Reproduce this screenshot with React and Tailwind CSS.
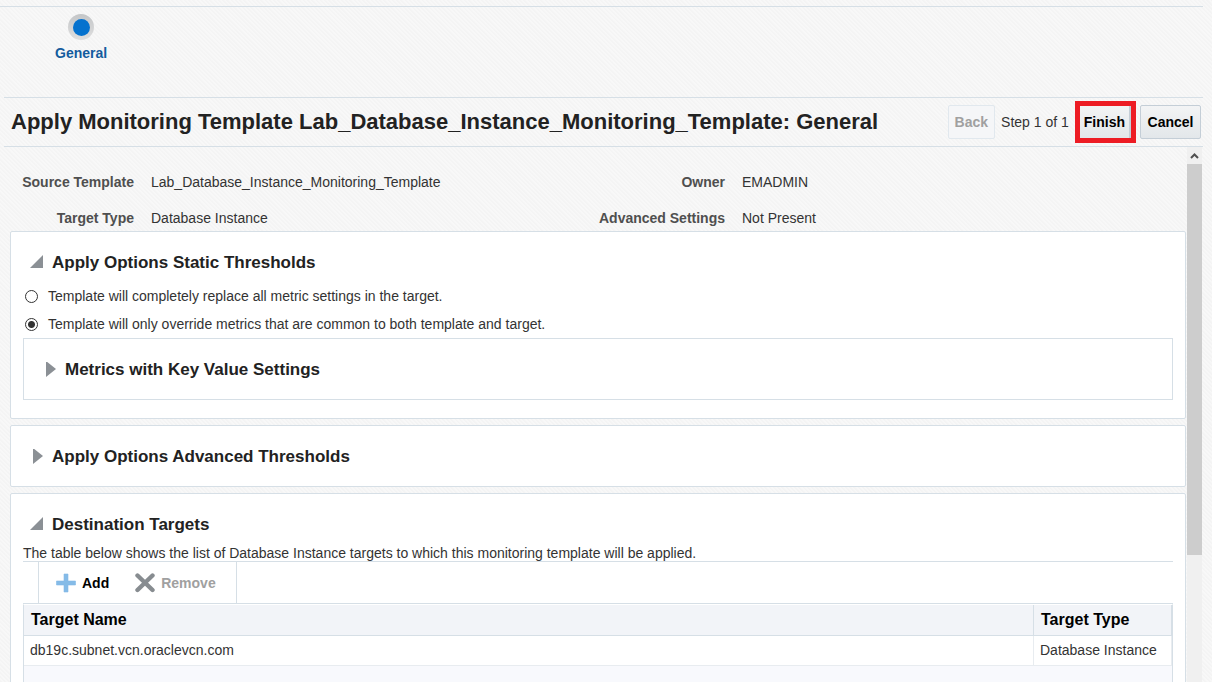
import { useState } from "react";

function Disclosure({ open, onToggle, children }) {
  return (
    <h2 className="text-[17px] leading-5 font-bold text-[#222222]">
      <button type="button" aria-expanded={open} onClick={onToggle} className="flex items-center gap-2">
        <svg viewBox="0 0 14 16" className="h-4 w-[14px] shrink-0" aria-hidden="true">
          {open ? <path d="M13 0v13H0z" fill="#8b9095" /> : <path d="M3 -1l10 8-10 8z" fill="#8b9095" />}
        </svg>
        {children}
      </button>
    </h2>
  );
}

function Field({ label, children }) {
  return (
    <>
      <dt className="text-right font-bold text-[#4f4f4f]">{label}</dt>
      <dd>{children}</dd>
    </>
  );
}

function Option({ label, checked, onChange }) {
  return (
    <label className="flex items-center gap-[10px]">
      <input
        type="radio"
        name="static-thresholds"
        checked={checked}
        onChange={onChange}
        className="h-[13px] w-[13px] appearance-none rounded-full border border-[#333333] bg-white checked:bg-[radial-gradient(circle,#333333_0_3px,#ffffff_4px)]"
      />
      {label}
    </label>
  );
}

const hatch =
  "bg-[#f6f6f6] bg-[repeating-linear-gradient(45deg,#f4f4f4_0_1px,#f8f8f8_2px_3px)]";

const buttonBase =
  "h-[34px] rounded-[2px] border px-[6px] text-[14px] leading-5 font-bold";

export default function App() {
  const [mode, setMode] = useState("override");
  const [open, setOpen] = useState({ basic: true, keys: false, advanced: false, targets: true });
  const toggle = (name) => () => setOpen({ ...open, [name]: !open[name] });

  return (
    <div className={`flex h-screen flex-col overflow-hidden pr-[9px] pt-[6px] font-['Liberation_Sans',Arial,sans-serif] text-[14px] leading-5 text-[#333333] ${hatch}`}>
      <nav aria-label="Progress" className="h-[91px] shrink-0 border-t border-[#d6dfe6] pl-[55px] pt-[7px]">
        <ol className="flex">
          <li className="flex flex-col items-center gap-[3px] font-bold text-[#145c9e]" aria-current="step">
            <span className="flex h-[26px] w-[26px] items-center justify-center rounded-full bg-linear-to-b from-[#c4c6c8] to-[#dfdfdf]">
              <span className="h-[17px] w-[17px] rounded-full bg-[#0572ce]" />
            </span>
            General
          </li>
        </ol>
      </nav>

      <header className="ml-1 flex h-[50px] shrink-0 items-center justify-between border-y border-[#d6dfe6] pl-[7px] pr-[2px]">
        <h1 className="text-[22px] leading-7 font-bold text-[#222222]">
          Apply Monitoring Template Lab_Database_Instance_Monitoring_Template: General
        </h1>
        <div className="flex shrink-0 items-center">
          <button type="button" disabled className={`${buttonBase} border-[#e1e8ee] bg-[#f5f6f8] text-[#a0a0a0]`}>Back</button>
          <span className="px-[6px]">Step 1 of 1</span>
          <span className="border-5 border-[#ed1c24]">
            <button type="button" className="block h-8 border-r-2 border-[#c4ced7] bg-linear-to-b from-[#f3f4f5] to-[#e3e7ea] px-1 font-bold text-black">Finish</button>
          </span>
          <button type="button" className={`${buttonBase} ml-1 min-w-[61px] border-[#c4ced7] bg-linear-to-b from-[#f3f4f5] to-[#e3e7ea] text-black`}>Cancel</button>
        </div>
      </header>

      <div className="flex min-h-0 flex-1">
        <main className="min-w-0 flex-1 overflow-y-auto pl-[10px] [scrollbar-width:none]">
          <div className="flex h-[84px] pt-[25px]">
            <dl className="grid w-1/2 grid-cols-[124px_1fr] content-start gap-x-[17px] gap-y-4">
              <Field label="Source Template">Lab_Database_Instance_Monitoring_Template</Field>
              <Field label="Target Type">Database Instance</Field>
            </dl>
            <dl className="grid w-1/2 grid-cols-[127px_1fr] content-start gap-x-[17px] gap-y-4">
              <Field label="Owner">EMADMIN</Field>
              <Field label="Advanced Settings">Not Present</Field>
            </dl>
          </div>

          <section className="mb-[6px] rounded-[2px] border border-[#d6dfe6] bg-white px-3 pb-[18px] pt-[21px]">
            <div className="pl-[7px]">
              <Disclosure open={open.basic} onToggle={toggle("basic")}>Apply Options Static Thresholds</Disclosure>
            </div>
            {open.basic && (
              <>
                <fieldset aria-label="Apply Options Static Thresholds" className="flex flex-col gap-2 pb-1 pl-[2px] pt-[13px]">
                  <Option
                    label="Template will completely replace all metric settings in the target."
                    checked={mode === "replace"}
                    onChange={() => setMode("replace")}
                  />
                  <Option
                    label="Template will only override metrics that are common to both template and target."
                    checked={mode === "override"}
                    onChange={() => setMode("override")}
                  />
                </fieldset>
                <section className="border border-[#d6dfe6] pb-[19px] pl-[19px] pt-[21px]">
                  <Disclosure open={open.keys} onToggle={toggle("keys")}>Metrics with Key Value Settings</Disclosure>
                </section>
              </>
            )}
          </section>

          <section className="mb-[6px] rounded-[2px] border border-[#d6dfe6] bg-white pb-[19px] pl-[19px] pt-[21px]">
            <Disclosure open={open.advanced} onToggle={toggle("advanced")}>Apply Options Advanced Thresholds</Disclosure>
          </section>

          <section className="rounded-[2px] border border-[#d6dfe6] bg-white px-3 pb-6 pt-[21px]">
            <div className="pl-[7px]">
              <Disclosure open={open.targets} onToggle={toggle("targets")}>Destination Targets</Disclosure>
            </div>
            {open.targets && (
              <>
                <p className="pt-[10px] leading-4">
                  The table below shows the list of Database Instance targets to which this monitoring template will be applied.
                </p>
                <div className="flex h-[43px] border-y border-[#d6dfe6] pl-[15px]">
                  <div className="flex items-center gap-[26px] border-x border-[#d6dfe6] pl-[17px] pr-5">
                    <button type="button" className="flex items-center gap-[6px] font-bold text-black">
                      <svg viewBox="0 0 20 20" className="h-5 w-5" aria-hidden="true">
                        <path d="M8 1h4v7h7.500v4H12v7H8v-7H.5V8H8z" fill="#85bbe7" stroke="#85bbe7" strokeWidth="0.6" strokeLinejoin="round" />
                      </svg>
                      Add
                    </button>
                    <button type="button" disabled className="flex items-center gap-[6px] font-bold text-[#a0a0a0]">
                      <svg viewBox="0 0 20 20" className="h-5 w-5" aria-hidden="true">
                        <path d="M2.500 2.500l15 14.500M17.500 2.500L2.500 17" stroke="#878c90" strokeWidth="4.4" strokeLinecap="round" />
                      </svg>
                      Remove
                    </button>
                  </div>
                </div>
                <div className="min-h-[160px] border-x border-t border-[#d6dfe6] border-t-white bg-[#f8f9fd]">
                  <table className="w-full border-collapse text-left">
                    <thead className="bg-[#f2f4f8] text-[16px] text-black">
                      <tr className="h-[30px] border-b border-[#d6dfe6]">
                        <th scope="col" className="border-r border-[#d6dfe6] px-[7px] font-bold">Target Name</th>
                        <th scope="col" className="w-[138px] border-r border-[#d6dfe6] px-[7px] font-bold">Target Type</th>
                      </tr>
                    </thead>
                    <tbody>
                      <tr className="h-[30px] border-b border-[#e8ecf0] bg-white">
                        <td className="border-r border-[#e8ecf0] px-[6px]">db19c.subnet.vcn.oraclevcn.com</td>
                        <td className="border-r border-[#e8ecf0] px-[6px]">Database Instance</td>
                      </tr>
                    </tbody>
                  </table>
                </div>
              </>
            )}
          </section>
        </main>

        <div className="ml-px mr-px flex w-[15px] shrink-0 flex-col bg-[#f0f0f0]" aria-hidden="true">
          <svg viewBox="0 0 15 17" className="h-[17px] w-[15px] shrink-0">
            <path d="M4 11l3.500-3.500L11 11" fill="none" stroke="#505050" strokeWidth="2" />
          </svg>
          <div className="h-[73%] bg-[#cdcdcd]" />
        </div>
      </div>
    </div>
  );
}
